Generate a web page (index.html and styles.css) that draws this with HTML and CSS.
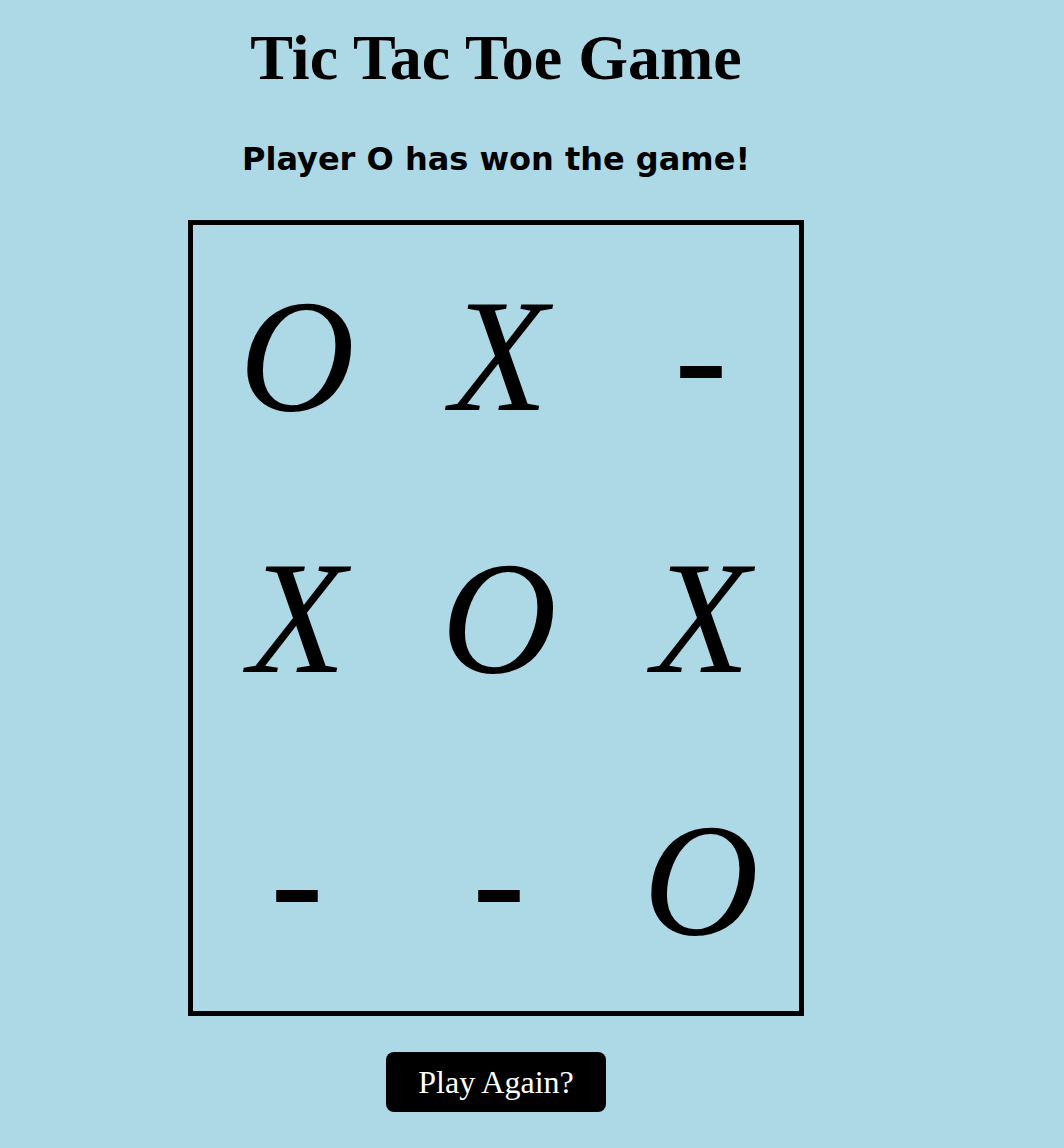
FILE: index.html
```html
<!DOCTYPE html>
<html>
<head>
<meta charset="utf-8">
<link rel="stylesheet" href="styles.css">
</head>
<body>
<div class="app">
  <h1 class="title">Tic Tac Toe Game</h1>
  <h2 class="status">Player O has won the game!</h2>
  <div class="board">
    <div class="cell">O</div>
    <div class="cell">X</div>
    <div class="cell">-</div>
    <div class="cell">X</div>
    <div class="cell">O</div>
    <div class="cell">X</div>
    <div class="cell">-</div>
    <div class="cell">-</div>
    <div class="cell">O</div>
  </div>
  <button class="again">Play Again?</button>
</div>
</body>
</html>
```
FILE: styles.css
```css
html, body {
  margin: 0;
  padding: 0;
  background: #add8e6;
}
.app {
  width: 992px;
  display: flex;
  flex-direction: column;
  align-items: center;
  font-family: "Liberation Serif", serif;
  color: #000;
}
.title {
  margin: 22px 0 0;
  font-size: 64px;
  line-height: 72px;
  font-weight: bold;
}
.status {
  margin: 46px 0 0;
  font-family: "DejaVu Sans", sans-serif;
  font-size: 32px;
  line-height: 38px;
  font-weight: bold;
}
.board {
  margin-top: 42px;
  width: 606px;
  border: 5px solid #000;
  display: grid;
  grid-template-columns: repeat(3, 202px);
  grid-template-rows: repeat(3, 262px);
}
.cell {
  display: flex;
  align-items: center;
  justify-content: center;
  padding-left: 6px;
  font-family: "Liberation Serif", serif;
  font-style: italic;
  font-size: 160px;
  line-height: 1;
}
.again {
  margin-top: 36px;
  width: 220px;
  height: 60px;
  background: #000;
  color: #fff;
  border: none;
  border-radius: 8px;
  font-family: "Liberation Serif", serif;
  font-size: 32px;
}
```
